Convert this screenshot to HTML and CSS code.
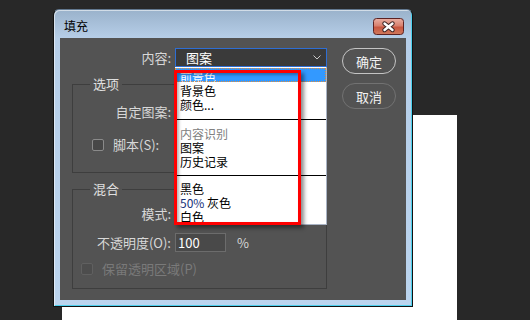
FILE: index.html
```html
<!DOCTYPE html>
<html lang="zh-CN">
<head>
    <meta charset="UTF-8">
    <title>填充</title>
    <link rel="stylesheet" href="styles.css">
</head>
<body>

    <div class="doc"></div>

    <div class="dialog">
        <div class="titlebar">
            <span class="title">填充</span>
            <span class="close">
                <svg width="31" height="17" viewBox="0 0 31 17">
                    <defs>
                        <linearGradient id="cg" x1="0" y1="0" x2="0" y2="1">
                            <stop offset="0" stop-color="#eab0a4"/>
                            <stop offset="0.45" stop-color="#d8806e"/>
                            <stop offset="0.55" stop-color="#c85640"/>
                            <stop offset="1" stop-color="#d07a5c"/>
                        </linearGradient>
                    </defs>
                    <rect x="0.5" y="0.5" width="30" height="16" rx="3" fill="url(#cg)" stroke="#5c2222"/>
                    <path d="M11.5 5.5 L19.5 12 M19.5 5.5 L11.5 12" stroke="#3a2424" stroke-width="4.4" stroke-linecap="round"/>
                    <path d="M11.5 5.5 L19.5 12 M19.5 5.5 L11.5 12" stroke="#fff" stroke-width="2.4" stroke-linecap="round"/>
                </svg>
            </span>
        </div>

        <div class="panel">
            <div class="main">
                <div class="row top">
                    <span class="lbl">内容:</span>
                    <div class="select">
                        <span>图案</span>
                        <svg class="chev" width="8" height="5" viewBox="0 0 8 5"><path d="M0.5 0.5 L4 4 L7.5 0.5" fill="none" stroke="#c8c8c8"/></svg>
                    </div>
                </div>

                <div class="group g-opts">
                    <div class="group-title">选项</div>
                    <div class="row r1"><span class="lbl">自定图案:</span></div>
                    <div class="row r2 check"><span class="box"></span><span>脚本(S):</span></div>
                </div>

                <div class="group g-blend">
                    <div class="group-title">混合</div>
                    <div class="row r3"><span class="lbl">模式:</span></div>
                    <div class="row r4">
                        <span class="lbl">不透明度(O):</span>
                        <span class="num">100</span>
                        <span class="pct">%</span>
                    </div>
                    <div class="row r5 check off"><span class="box"></span><span>保留透明区域(P)</span></div>
                </div>
            </div>

            <div class="side">
                <button class="btn">确定</button>
                <button class="btn dim">取消</button>
            </div>

            <ul class="list">
                <li class="on">前景色</li>
                <li>背景色</li>
                <li>颜色...</li>
                <li class="sep s1"></li>
                <li class="grey">内容识别</li>
                <li>图案</li>
                <li>历史记录</li>
                <li class="sep s2"></li>
                <li>黑色</li>
                <li><span class="blue">50%</span> 灰色</li>
                <li>白色</li>
            </ul>

            <div class="mark"></div>
        </div>
    </div>

</body>
</html>
```

FILE: styles.css
```css
html, body {
    margin: 0;
    width: 530px;
    height: 320px;
    overflow: hidden;
}
body {
    position: relative;
    background: #282828;
    font-family: "Noto Sans CJK SC", "Noto Sans", sans-serif;
    font-size: 13px;
    color: #d8d8d8;
}

/* white document canvas behind the dialog */
.doc {
    position: absolute;
    left: 62px;
    top: 115px;
    width: 395px;
    height: 205px;
    background: #fff;
}

.dialog {
    position: absolute;
    left: 53px;
    top: 9px;
    width: 360px;
    height: 298px;
    box-sizing: border-box;
    border: 1px solid #111;
    border-top-color: #62788f;
    border-radius: 6px 6px 0 0;
    padding: 0 6px 6px;
    background: linear-gradient(#9ab2cb, #b6cee8 28px, #bbd4ee);
    box-shadow: inset 1px 1px 0 rgba(255, 255, 255, 0.55), inset -1px -1px 0 #4cd0ee;
    display: flex;
    flex-direction: column;
}
.titlebar {
    height: 28px;
    box-sizing: border-box;
    padding-top: 4px;
    display: flex;
    align-items: center;
}
.title {
    margin-left: 4px;
    color: #000;
    font-size: 12px;
    line-height: 16px;
}
.close {
    margin-left: auto;
    margin-right: 2px;
    width: 31px;
    height: 17px;
}
.close svg {
    display: block;
}

.panel {
    position: relative;
    height: 262px;
    box-sizing: border-box;
    padding-top: 10px;
    background: #535353;
    display: flex;
}
.main {
    width: 267px;
    padding-left: 12px;
    box-sizing: border-box;
}
.row {
    display: flex;
    align-items: center;
    gap: 4px;
    height: 20px;
    line-height: 16px;
}
.lbl {
    width: 98px;
    text-align: right;
    white-space: nowrap;
}
.top {
    height: 19px;
}
.top .lbl {
    width: 99px;
}
.select {
    width: 152px;
    height: 19px;
    box-sizing: border-box;
    border: 1px solid #2e6ed4;
    background: #3a3a3a;
    color: #fff;
    padding: 0 5px 0 10px;
    display: flex;
    align-items: center;
    justify-content: space-between;
}

.group {
    width: 255px;
    box-sizing: border-box;
    border: 1px solid #3e3e3e;
}
.g-opts {
    margin-top: 17px;
    height: 89px;
}
.g-blend {
    margin-top: 16px;
    height: 100px;
}
.group-title {
    width: fit-content;
    height: 16px;
    line-height: 16px;
    margin: -9px 0 0 17px;
    padding: 0 3px;
    background: #535353;
    color: #e0e0e0;
}
.r1 { margin-top: 10px; }
.r2 { margin-top: 13px; }
.r3 { margin-top: 7px; }
.r4 { margin-top: 9px; height: 19px; }
.r5 { margin-top: 7px; }

.check {
    gap: 9px;
}
.r2 .box {
    margin-left: 19px;
}
.r5 .box {
    margin-left: 8px;
}
.box {
    width: 12px;
    height: 12px;
    box-sizing: border-box;
    border: 1px solid #8a8a8a;
    border-radius: 2px;
    background: #474747;
}
.off {
    color: #7a7a7a;
}
.off .box {
    border-color: #606060;
    background: #4d4d4d;
}
.num {
    width: 51px;
    height: 19px;
    box-sizing: border-box;
    border: 1px solid #6c6c6c;
    background: #494949;
    color: #fff;
    padding-left: 2px;
    line-height: 17px;
}
.pct {
    margin-left: 7px;
}

.side {
    margin-left: 15px;
    display: flex;
    flex-direction: column;
    gap: 9px;
}
.btn {
    width: 54px;
    height: 26px;
    padding: 0;
    border: 1px solid #c4c4c4;
    border-radius: 13px;
    background: transparent;
    color: #f2f2f2;
    font-family: inherit;
    font-size: 13px;
}
.btn.dim {
    border-color: #727272;
}

/* open dropdown of the select */
.list {
    position: absolute;
    left: 115px;
    top: 29px;
    width: 152px;
    height: 158px;
    box-sizing: border-box;
    margin: 0;
    padding: 1px 0 0;
    list-style: none;
    background: #fff;
    border-right: 1px solid #a9b3c4;
    border-bottom: 1px solid #a9b3c4;
    overflow: hidden;
    color: #000;
    font-size: 12px;
}
.list li {
    height: 11px;
    padding: 3px 0 0 5px;
    line-height: 11px;
    white-space: nowrap;
}
.list li.on {
    background: #3399ff;
    color: #fff;
    outline: 1px dotted #e38f3c;
    outline-offset: -1px;
}
.list li.grey {
    color: #808080;
}
.list .blue {
    color: #17337a;
}
.list li.sep {
    height: 1px;
    padding: 0;
    background: #000;
}
.list li.s1 { margin: 9px 0 5px; }
.list li.s2 { margin: 8px 0 4px; }

/* red highlight box drawn over the list */
.mark {
    position: absolute;
    left: 114px;
    top: 32px;
    width: 127px;
    height: 155px;
    box-sizing: border-box;
    border: 3px solid #ff0000;
    box-shadow: 3px 3px 4px rgba(0, 0, 0, 0.45), inset 2px 2px 3px rgba(0, 0, 0, 0.3);
}
```
